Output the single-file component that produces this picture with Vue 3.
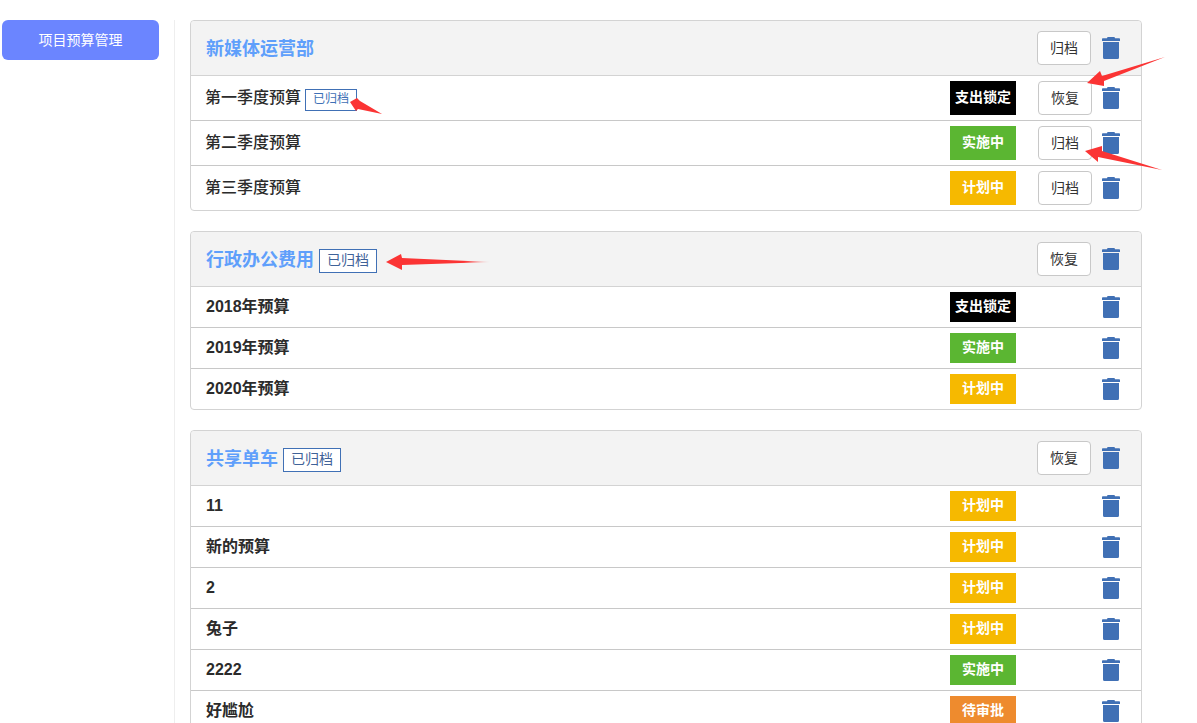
<script setup>
const STATUS = {
  lock: { label: '支出锁定', cls: 'lock' },
  run: { label: '实施中', cls: 'run' },
  plan: { label: '计划中', cls: 'plan' },
  wait: { label: '待审批', cls: 'wait' }
}
const groups = [
  {
    name: '新媒体运营部', archived: false, action: '归档', roomy: true,
    rows: [
      { name: '第一季度预算', tag: true, status: 'lock', action: '恢复' },
      { name: '第二季度预算', status: 'run', action: '归档' },
      { name: '第三季度预算', status: 'plan', action: '归档' }
    ]
  },
  {
    name: '行政办公费用', archived: true, action: '恢复',
    rows: [
      { name: '2018年预算', status: 'lock' },
      { name: '2019年预算', status: 'run' },
      { name: '2020年预算', status: 'plan' }
    ]
  },
  {
    name: '共享单车', archived: true, action: '恢复',
    rows: [
      { name: '11', status: 'plan' },
      { name: '新的预算', status: 'plan' },
      { name: '2', status: 'plan' },
      { name: '兔子', status: 'plan' },
      { name: '2222', status: 'run' },
      { name: '好尴尬', status: 'wait' }
    ]
  }
]
const trashPath = 'M5.500 0h7l.5 1.300h4.200a.8.8 0 0 1 .8.8V4H0V2.100a.8.8 0 0 1 .8-.8H5zM1 5h16v15.500a1.500 1.500 0 0 1-1.500 1.500h-13A1.500 1.500 0 0 1 1 20.500z'
</script>

<template>
  <div class="page">
    <aside class="side">
      <div class="nav-btn">项目预算管理</div>
    </aside>
    <main class="main">
      <section v-for="g in groups" :key="g.name" class="card">
        <header class="head">
          <span class="title">{{ g.name }}</span>
          <span v-if="g.archived" class="tag big">已归档</span>
          <span class="spacer"></span>
          <button class="btn">{{ g.action }}</button>
          <svg class="trash" viewBox="0 0 18 22"><path :d="trashPath"/></svg>
        </header>
        <div v-for="r in g.rows" :key="r.name" class="row" :class="{ roomy: g.roomy }">
          <span class="name">{{ r.name }}</span>
          <span v-if="r.tag" class="tag">已归档</span>
          <span class="spacer"></span>
          <span class="status" :class="STATUS[r.status].cls">{{ STATUS[r.status].label }}</span>
          <span class="slot">
            <button v-if="r.action" class="btn">{{ r.action }}</button>
          </span>
          <svg class="trash" viewBox="0 0 18 22"><path :d="trashPath"/></svg>
        </div>
      </section>
    </main>
    <svg class="arrows" viewBox="0 0 1197 723" width="1197" height="723">
      <defs>
        <linearGradient id="fadeL" x1="0" x2="1" y1="0" y2="0">
          <stop offset="0.75" stop-color="#fb3434"/>
          <stop offset="1" stop-color="#fb3434" stop-opacity="0.15"/>
        </linearGradient>
      </defs>
      <polygon points="350,102 357,98 360,101 382,114 358,109 356,111" fill="#fb3434"/>
      <polygon points="1087,83 1100,71 1102,76 1165,57 1104,81 1104,86" fill="#fb3434"/>
      <polygon points="1085,151 1102,146 1102,151 1162,170 1098,157 1098,162" fill="#fb3434"/>
      <polygon points="386,262 401,254 402,258 490,262 402,265 402,270" fill="url(#fadeL)"/>
    </svg>
  </div>
</template>

<style>
html, body { margin: 0; height: 100%; overflow: hidden; background: #fff; }
</style>

<style scoped>
.page {
  position: relative;
  display: flex;
  height: 723px;
  overflow: hidden;
  padding-top: 20px;
  box-sizing: border-box;
  font-family: "Liberation Sans", "Noto Sans CJK SC", sans-serif;
  color: #2b2b2b;
}
.side {
  width: 175px;
  flex: none;
  box-sizing: border-box;
  padding-left: 2px;
  border-right: 1px solid #eeeeee;
}
.nav-btn {
  width: 157px;
  height: 40px;
  line-height: 40px;
  text-align: center;
  background: #6b85ff;
  color: #fff;
  font-size: 14px;
  border-radius: 6px;
}
.main {
  margin-left: 15px;
  width: 952px;
  flex: none;
  display: flex;
  flex-direction: column;
  gap: 20px;
}
.card {
  flex: none;
  border: 1px solid #d3d3d3;
  border-radius: 4px;
}
.head {
  display: flex;
  align-items: center;
  height: 54px;
  padding: 0 21px 0 15px;
  background: #f3f3f3;
  border-bottom: 1px solid #d3d3d3;
  border-radius: 4px 4px 0 0;
}
.head .trash { margin-left: 11px; }
.title {
  font-size: 18px;
  line-height: 24px;
  margin-top: 2px;
  font-weight: 700;
  color: #5f9ffb;
}
.spacer { flex: 1; }
.row {
  display: flex;
  align-items: center;
  height: 40px;
  padding: 0 21px 0 15px;
  border-bottom: 1px solid #c8c8c8;
}
.row:last-child { border-bottom: 0; }
.row.roomy { height: 44px; padding-left: 14px; }
.row.roomy .name { font-weight: 500; }
.row.roomy .status {
  height: 34px;
  line-height: 32px;
}
.name {
  font-size: 16px;
  line-height: 20px;
  font-weight: 700;
  color: #2b2b2b;
}
.tag {
  margin: 4px 0 0 4px;
  width: 52px;
  height: 22px;
  box-sizing: border-box;
  line-height: 19px;
  text-align: center;
  font-size: 12px;
  color: #4070b5;
  border: 1px solid #4070b5;
  background: #fff;
}
.tag.big {
  margin: 4px 0 0 5px;
  width: 58px;
  height: 24px;
  line-height: 21px;
  font-size: 14px;
  color: #3f6298;
}
.status {
  width: 66px;
  height: 30px;
  line-height: 29px;
  text-align: center;
  color: #fff;
  font-size: 14px;
  font-weight: 700;
}
.lock { background: #000; }
.run { background: #5bb632; }
.plan { background: #f6b900; }
.wait { background: #ee8b2e; }
.slot {
  width: 54px;
  margin-left: 22px;
  flex: none;
}
.btn {
  display: block;
  width: 54px;
  height: 34px;
  padding: 0;
  background: #fff;
  border: 1px solid #c8c8c8;
  border-radius: 4px;
  font-family: inherit;
  font-size: 14px;
  line-height: 30px;
  color: #333;
}
.trash {
  width: 18px;
  height: 22px;
  margin-left: 10px;
  flex: none;
  fill: #4070b5;
}
.arrows {
  position: absolute;
  left: 0;
  top: 0;
  pointer-events: none;
}
</style>
